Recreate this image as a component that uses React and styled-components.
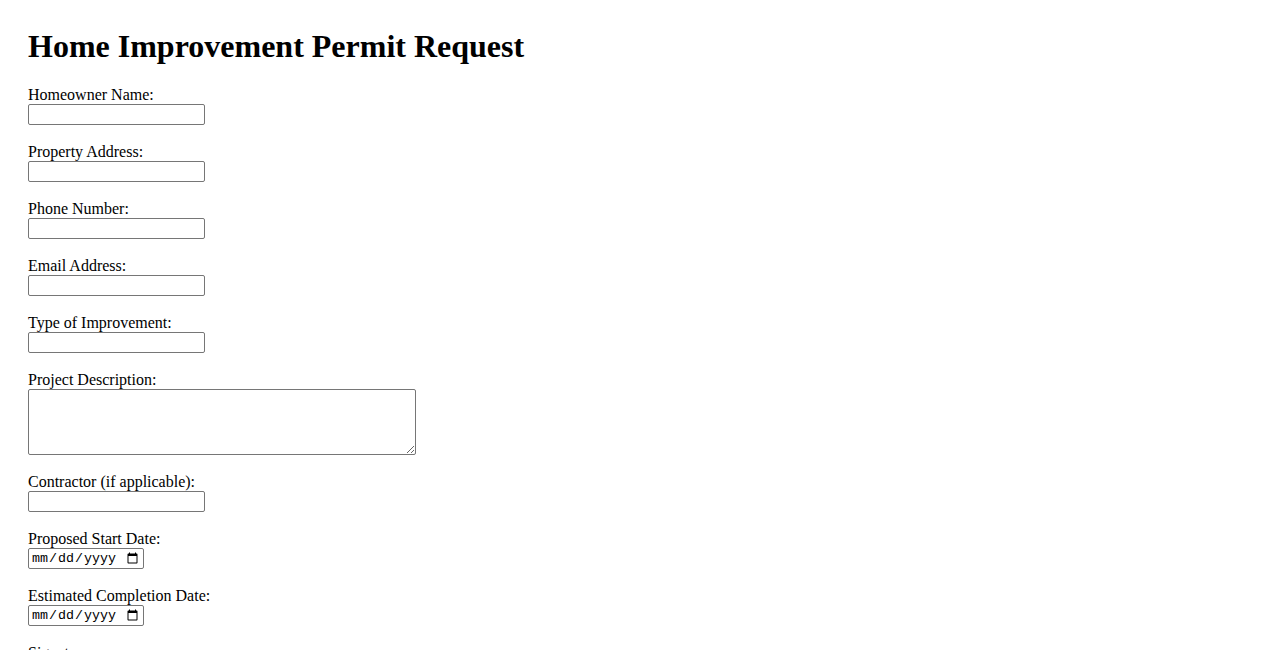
import React from 'react'
import styled, { createGlobalStyle } from 'styled-components'

const GlobalStyle = createGlobalStyle`
    body {
        margin: 0;
        background: #ffffff;
        color: #000000;
        font-family: "Liberation Serif", "Times New Roman", serif;
        font-size: 16px;
    }
`

const Page = styled.div`
    padding: 28px;
`

const Title = styled.h1`
    font-size: 32px;
    font-weight: bold;
    margin: 0 0 21.44px 0;
`

const Form = styled.form`
    display: flex;
    flex-direction: column;
    align-items: flex-start;
`

const Field = styled.div`
    display: flex;
    flex-direction: column;
    align-items: flex-start;
    margin-bottom: 18px;
`

const Label = styled.label`
    display: block;
    line-height: normal;
`

const TextInput = styled.input`
    box-sizing: border-box;
    width: ${props => props.$width || 177}px;
    height: 21px;
    padding: 1px 2px;
    margin: 0;
    border: 1px solid #767676;
    border-radius: 2px;
    background: #ffffff;
    font-family: ${props => props.type === 'date'
        ? '"Liberation Mono", "DejaVu Sans Mono", monospace'
        : '"Liberation Sans", Arial, sans-serif'};
    font-size: 13.33px;
    color: #000000;
`

const TextArea = styled.textarea`
    box-sizing: border-box;
    width: 388px;
    height: 66px;
    padding: 2px;
    margin: 0;
    border: 1px solid #767676;
    border-radius: 2px;
    font-family: "Liberation Mono", monospace;
    font-size: 13.33px;
`

const SubmitButton = styled.button`
    font-family: "Liberation Sans", Arial, sans-serif;
    font-size: 13.33px;
    padding: 1px 6px;
    border: 1px solid #767676;
    border-radius: 2px;
    background: #efefef;
`

const fields = [
    { id: 'name', label: 'Homeowner Name:', type: 'text' },
    { id: 'address', label: 'Property Address:', type: 'text' },
    { id: 'phone', label: 'Phone Number:', type: 'tel' },
    { id: 'email', label: 'Email Address:', type: 'email' },
    { id: 'improvement', label: 'Type of Improvement:', type: 'text' },
    { id: 'description', label: 'Project Description:', type: 'textarea' },
    { id: 'contractor', label: 'Contractor (if applicable):', type: 'text' },
    { id: 'start', label: 'Proposed Start Date:', type: 'date' },
    { id: 'completion', label: 'Estimated Completion Date:', type: 'date' },
    { id: 'signature', label: 'Signature:', type: 'text' },
]

export default function App() {
    return (
        <Page>
            <GlobalStyle />
            <Title>Home Improvement Permit Request</Title>
            <Form onSubmit={e => e.preventDefault()}>
                {fields.map(f => (
                    <Field key={f.id}>
                        <Label htmlFor={f.id}>{f.label}</Label>
                        {f.type === 'textarea'
                            ? <TextArea id={f.id} />
                            : <TextInput id={f.id} type={f.type} $width={f.type === 'date' ? 116 : 177} />}
                    </Field>
                ))}
                <SubmitButton type="submit">Submit Request</SubmitButton>
            </Form>
        </Page>
    )
}
